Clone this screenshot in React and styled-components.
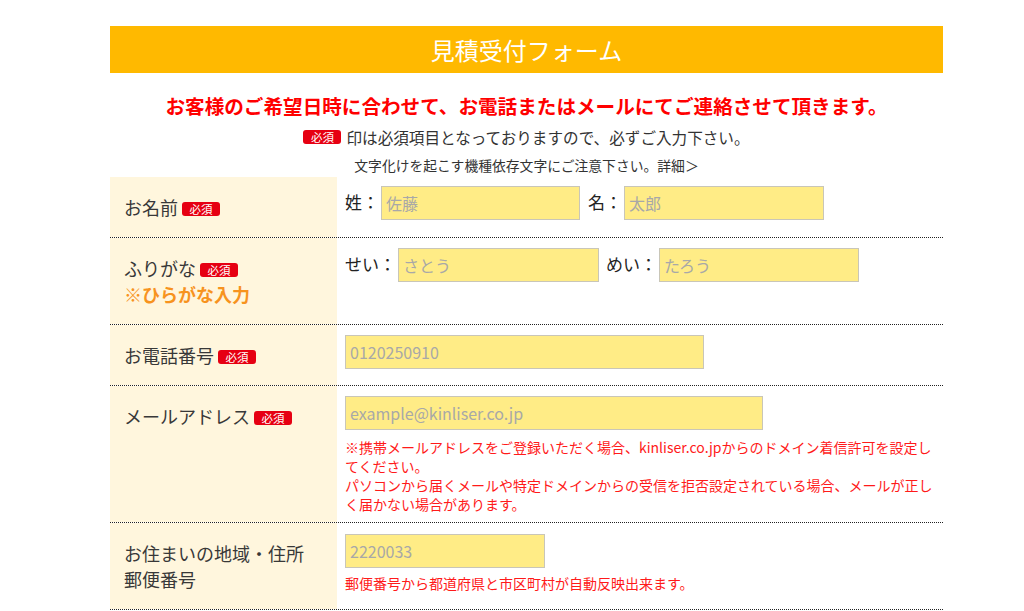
import React from 'react';
import styled, { createGlobalStyle } from 'styled-components';

const GlobalStyle = createGlobalStyle`
  body {
    margin: 0;
    background: #fff;
    color: #333;
    font-family: 'Noto Sans CJK JP', 'Noto Sans', sans-serif;
  }
`;

function App() {
  return (
    <>
      <GlobalStyle />
      <Page>
        <Title>見積受付フォーム</Title>
        {/* intro text */}
        <Lead>お客様のご希望日時に合わせて、お電話またはメールにてご連絡させて頂きます。</Lead>
        <Notice>
          <Badge>必須</Badge>
          <span>印は必須項目となっておりますので、必ずご入力下さい。</span>
        </Notice>
        <Caution>文字化けを起こす機種依存文字にご注意下さい。詳細＞</Caution>

        <FormTable>
          <FormRow>
            <LabelCell>
              お名前<Badge $gap>必須</Badge>
            </LabelCell>
            <ValueCell $top={9}>
              <InputRow>
                <FieldLabel>姓：</FieldLabel>
                <TextInput $width={199} placeholder='佐藤' />
                <FieldLabel $lead={8}>名：</FieldLabel>
                <TextInput $width={200} placeholder='太郎' />
              </InputRow>
            </ValueCell>
          </FormRow>

          <FormRow>
            <LabelCell>
              ふりがな<Badge $gap>必須</Badge>
              <Hint>※ひらがな入力</Hint>
            </LabelCell>
            <ValueCell>
              <InputRow>
                <FieldLabel>せい：</FieldLabel>
                <TextInput $width={201} placeholder='さとう' />
                <FieldLabel $lead={7}>めい：</FieldLabel>
                <TextInput $width={200} placeholder='たろう' />
              </InputRow>
            </ValueCell>
          </FormRow>

          <FormRow>
            <LabelCell>
              お電話番号<Badge $gap>必須</Badge>
            </LabelCell>
            <ValueCell>
              <TextInput $width={359} placeholder='0120250910' />
            </ValueCell>
          </FormRow>

          <FormRow>
            <LabelCell>
              メールアドレス<Badge $gap>必須</Badge>
            </LabelCell>
            <ValueCell>
              <TextInput $width={418} placeholder='example@kinliser.co.jp' />
              <Note>
                ※携帯メールアドレスをご登録いただく場合、kinliser.co.jpからのドメイン着信許可を設定してください。
                <br />
                パソコンから届くメールや特定ドメインからの受信を拒否設定されている場合、メールが正しく届かない場合があります。
              </Note>
            </ValueCell>
          </FormRow>

          <FormRow>
            <LabelCell>
              お住まいの地域・住所
              <br />
              郵便番号
            </LabelCell>
            <ValueCell $top={11}>
              <TextInput $width={200} placeholder='2220033' />
              <Note $space={6}>郵便番号から都道府県と市区町村が自動反映出来ます。</Note>
            </ValueCell>
          </FormRow>
        </FormTable>
      </Page>
    </>
  );
}

export default App;

const Page = styled.div`
  width: 833px;
  margin: 26px 0 0 110px;
`;

const Title = styled.h1`
  margin: 0;
  height: 47px;
  display: flex;
  align-items: center;
  justify-content: center;
  background: #ffb900;
  color: #fff;
  font-size: 24px;
  font-weight: 400;
`;

const Lead = styled.p`
  margin: 18px 0 0;
  text-align: center;
  color: #f00;
  font-size: 19.6px;
  font-weight: 700;
  line-height: 30px;
  white-space: nowrap;
`;

const Notice = styled.p`
  margin: 3px 0 0;
  display: flex;
  align-items: center;
  justify-content: center;
  gap: 5px;
  font-size: 15.6px;
  line-height: 26px;
`;

const Caution = styled.p`
  margin: 4px 0 0;
  text-align: center;
  font-size: 13.8px;
  line-height: 22px;
`;

const Badge = styled.span`
  display: inline-block;
  width: 38px;
  height: 14px;
  margin-left: ${({ $gap }) => ($gap ? '4px' : '0')};
  border-radius: 3px;
  background: #e60012;
  color: #fff;
  font-size: 11.5px;
  line-height: 14px;
  text-align: center;
  vertical-align: 1px;
`;

const FormTable = styled.div`
  margin-top: 1px;
`;

const FormRow = styled.div`
  display: grid;
  grid-template-columns: 227px 1fr;
  border-bottom: 1px dotted #222;
`;

const LabelCell = styled.div`
  padding: 17px 14px;
  background: #fff6dd;
  font-size: 18px;
  line-height: 26px;
  color: #383838;
`;

const Hint = styled.span`
  display: block;
  color: #f7931e;
  font-weight: 700;
`;

const ValueCell = styled.div`
  padding: ${({ $top }) => $top ?? 10}px 8px 8px;
`;

const InputRow = styled.div`
  display: flex;
  align-items: center;
`;

const FieldLabel = styled.span`
  margin: -4px 2px 0 ${({ $lead }) => $lead ?? 0}px;
  font-size: 17px;
  color: #222;
  white-space: nowrap;
`;

const TextInput = styled.input`
  display: block;
  box-sizing: border-box;
  width: ${({ $width }) => $width}px;
  height: 34px;
  margin: 0;
  padding: 0 4px;
  border: 1px solid #c9c6b8;
  background: #ffec86;
  font-family: inherit;
  font-size: 16px;
  color: #333;
  outline: none;

  &::placeholder {
    color: #a8a8a8;
  }
`;

const Note = styled.p`
  margin: ${({ $space }) => $space ?? 8}px 0 0;
  color: #ff1a1a;
  font-size: 14px;
  line-height: 19px;
`;
